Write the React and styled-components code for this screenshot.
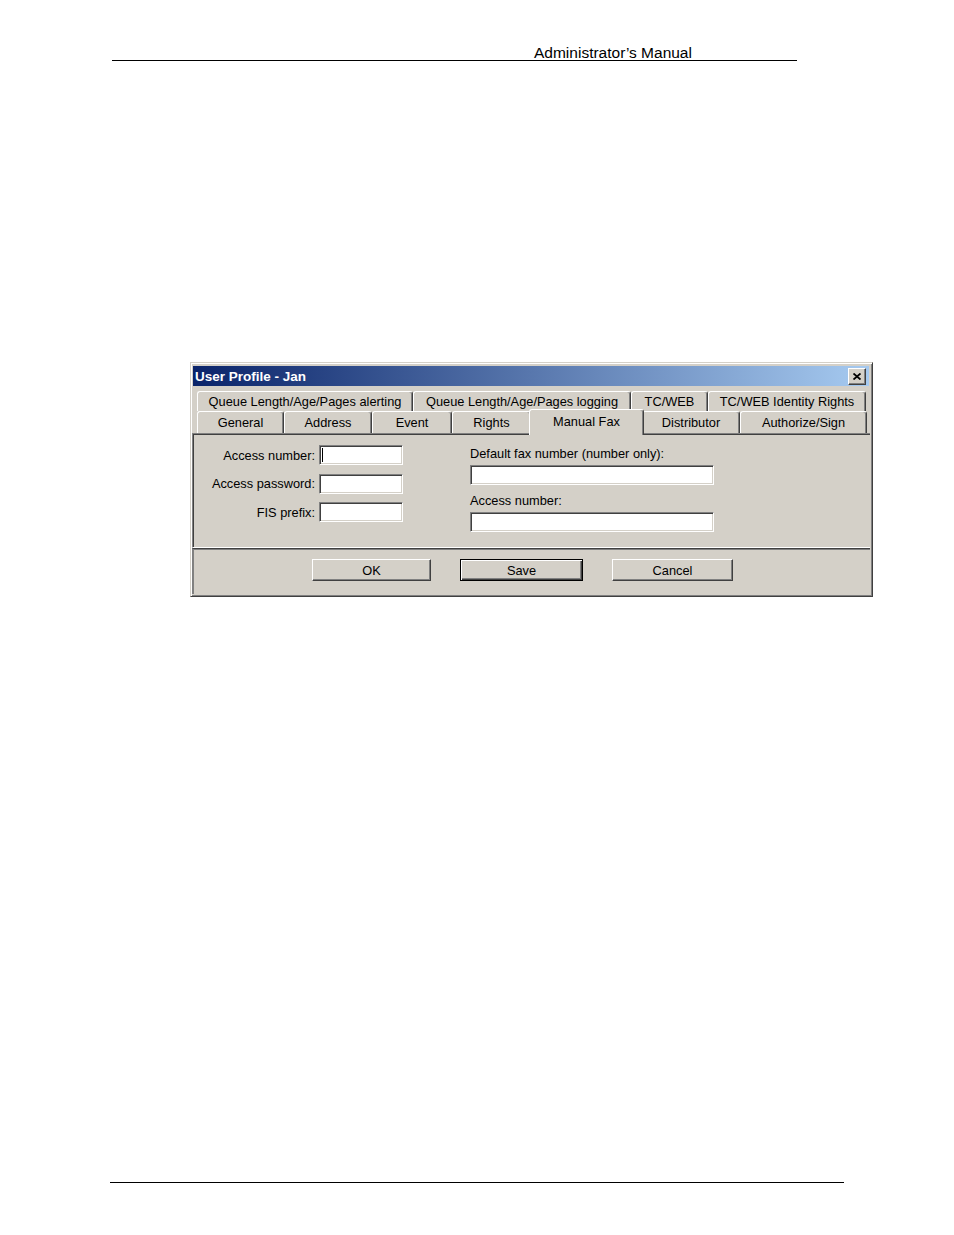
import styled, { createGlobalStyle } from 'styled-components';

const GlobalStyle = createGlobalStyle`
  body {
    margin: 0;
    background: #fff;
    font-family: "Liberation Sans", Arial, sans-serif;
  }
`;

const Page = styled.div`
  width: 954px;
  height: 1235px;
  display: flex;
  flex-direction: column;
`;

const Header = styled.div`
  margin-left: 112px;
  width: 685px;
  height: 61px;
  box-sizing: border-box;
  border-bottom: 1px solid #000;
  display: flex;
  align-items: flex-end;
  padding-left: 422px;
  font-size: 15.5px;
  line-height: 1;
  padding-bottom: 0;
  color: #000;
`;

const Footer = styled.div`
  margin: auto 0 52px 110px;
  width: 734px;
  border-top: 1px solid #000;
`;

// windows-classic dialog frame
const Dialog = styled.div`
  margin: 301px 0 0 190px;
  width: 683px;
  box-sizing: border-box;
  background: #d4d0c8;
  border: 1px solid;
  border-color: #d4d0c8 #404040 #404040 #d4d0c8;
  box-shadow: inset 1px 1px #fff, inset -1px -1px #808080;
  padding: 3px 2px 2px 2px;
  font-size: 12.8px;
  color: #000;
`;

const TitleBar = styled.div`
  height: 20px;
  display: flex;
  align-items: center;
  justify-content: space-between;
  padding: 0 3px 0 2px;
  margin-right: 1px;
  background: linear-gradient(to right, #0a246a, #a6caf0);
`;

const Title = styled.span`
  color: #fff;
  font-weight: bold;
  font-size: 13.5px;
`;

const CloseButton = styled.div`
  width: 18px;
  height: 17px;
  box-sizing: border-box;
  background: #d4d0c8;
  border: 1px solid;
  border-color: #fff #404040 #404040 #fff;
  box-shadow: inset -1px -1px #808080;
  display: flex;
  align-items: center;
  justify-content: center;
`;

const TabStrip = styled.div`
  margin-top: 5px;
  padding-left: 4px;
  display: flex;
  flex-direction: column;
`;

const TabRow = styled.div`
  display: flex;
  align-items: flex-end;
  height: ${(p) => p.$height}px;
`;

const Tab = styled.div`
  box-sizing: border-box;
  width: ${(p) => (p.$active ? p.$w + 4 : p.$w)}px;
  height: ${(p) => (p.$active ? 26 : p.$h)}px;
  margin: ${(p) => (p.$active ? '0 -2px -2px -2px' : '0')};
  padding-bottom: ${(p) => (p.$active ? 3 : 0)}px;
  position: ${(p) => (p.$active ? 'relative' : 'static')};
  z-index: ${(p) => (p.$active ? 2 : 'auto')};
  background: #d4d0c8;
  border-top: 1px solid #fff;
  border-left: 1px solid #fff;
  border-right: 1px solid #404040;
  box-shadow: inset -1px 0 #808080;
  border-radius: 3px 3px 0 0;
  display: flex;
  align-items: center;
  justify-content: center;
  white-space: nowrap;
`;

const Panel = styled.div`
  height: 115px;
  box-sizing: border-box;
  margin-left: -1px;
  border-top: 1px solid #808080;
  border-left: 1px solid #808080;
  border-bottom: 1px solid #fff;
  box-shadow: inset 1px 1px #404040;
  display: flex;
  padding: 11px 0 0 5px;
`;

const FieldGrid = styled.div`
  display: grid;
  grid-template-columns: 117px 84px;
  grid-auto-rows: 20px;
  column-gap: 4px;
  row-gap: 8.5px;
  align-items: center;
`;

const Label = styled.span`
  text-align: ${(p) => (p.$right ? 'right' : 'left')};
  line-height: 15px;
  white-space: nowrap;
`;

const InputBox = styled.div`
  box-sizing: border-box;
  width: ${(p) => p.$w}px;
  height: 20px;
  background: #fff;
  border: 1px solid;
  border-color: #808080 #fff #fff #808080;
  box-shadow: inset 1px 1px #404040, inset -1px -1px #d4d0c8;
  display: flex;
  align-items: center;
  padding-left: 2px;
`;

const Caret = styled.span`
  width: 1px;
  height: 14px;
  background: #000;
`;

const RightColumn = styled.div`
  margin-left: 67px;
  display: flex;
  flex-direction: column;
  padding-top: 1px;

  & > span + div {
    margin-top: 4px;
  }

  & > div + span {
    margin-top: 8px;
  }
`;

const ButtonBar = styled.div`
  height: 46px;
  box-sizing: border-box;
  margin-left: -1px;
  border-top: 1px solid #404040;
  border-left: 1px solid #808080;
  box-shadow: inset 1px 1px #808080;
  display: flex;
  gap: 29px;
  padding: 10px 0 0 119px;
`;

const Button = styled.div`
  box-sizing: border-box;
  width: ${(p) => p.$w}px;
  height: 22px;
  display: flex;
  align-items: center;
  justify-content: center;
  background: #d4d0c8;
  border: 1px solid;
  border-color: ${(p) => (p.$default ? '#000' : '#fff #404040 #404040 #fff')};
  box-shadow: ${(p) => (p.$default
    ? 'inset 1px 1px #fff, inset -1px -1px #404040, inset -2px -2px #808080'
    : 'inset -1px -1px #808080')};
`;

const backTabs = [
  { label: 'Queue Length/Age/Pages alerting', w: 216 },
  { label: 'Queue Length/Age/Pages logging', w: 218 },
  { label: 'TC/WEB', w: 77 },
  { label: 'TC/WEB Identity Rights', w: 158 },
];

const frontTabs = [
  { label: 'General', w: 87 },
  { label: 'Address', w: 88 },
  { label: 'Event', w: 80 },
  { label: 'Rights', w: 79 },
  { label: 'Manual Fax', w: 111, active: true },
  { label: 'Distributor', w: 98 },
  { label: 'Authorize/Sign', w: 127 },
];

export default function App() {
  return (
    <Page>
      <GlobalStyle />
      <Header>Administrator’s Manual</Header>

      <Dialog>
        <TitleBar>
          <Title>User Profile - Jan</Title>
          <CloseButton>
            <svg width="8" height="7" viewBox="0 0 8 7">
              <path d="M0.5 0.5L7.5 6.5M7.5 0.5L0.5 6.5" stroke="#000" strokeWidth="1.8" />
            </svg>
          </CloseButton>
        </TitleBar>

        <TabStrip>
          <TabRow $height={20}>
            {backTabs.map((t) => (
              <Tab key={t.label} $w={t.w} $h={20}>{t.label}</Tab>
            ))}
          </TabRow>
          <TabRow $height={22}>
            {frontTabs.map((t) => (
              <Tab key={t.label} $w={t.w} $h={22} $active={t.active}>{t.label}</Tab>
            ))}
          </TabRow>
        </TabStrip>

        <Panel>
          <FieldGrid>
            <Label $right>Access number:</Label>
            <InputBox $w={84}><Caret /></InputBox>
            <Label $right>Access password:</Label>
            <InputBox $w={84} />
            <Label $right>FIS prefix:</Label>
            <InputBox $w={84} />
          </FieldGrid>
          <RightColumn>
            <Label>Default fax number (number only):</Label>
            <InputBox $w={244} />
            <Label>Access number:</Label>
            <InputBox $w={244} />
          </RightColumn>
        </Panel>

        <ButtonBar>
          <Button $w={119}>OK</Button>
          <Button $w={123} $default>Save</Button>
          <Button $w={121}>Cancel</Button>
        </ButtonBar>
      </Dialog>

      <Footer />
    </Page>
  );
}
